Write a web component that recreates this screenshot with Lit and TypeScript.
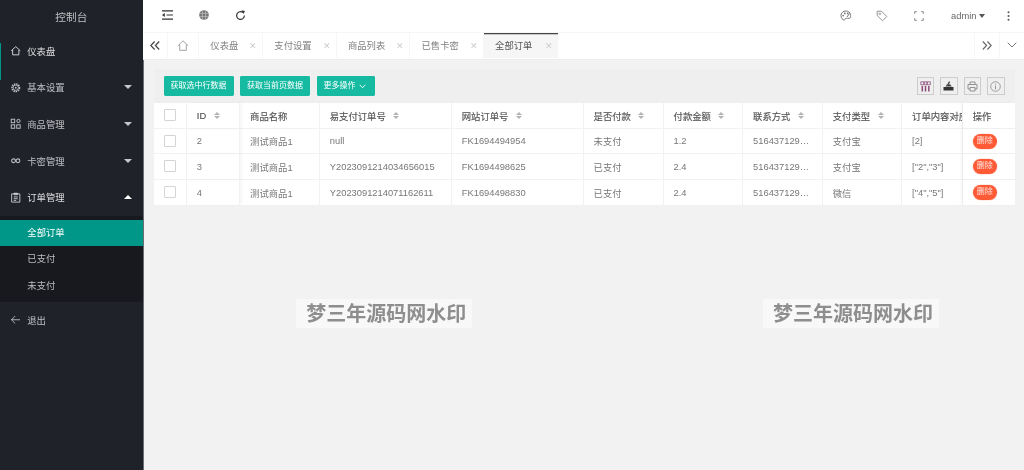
import { LitElement, html, css, svg } from "lit";
import { customElement } from "lit/decorators.js";

const I = {
  home: svg`<path d="M1.5 7 7 2l5.500 5M3.200 6v6h7.600V6" fill="none" stroke="currentColor" stroke-width="1.100"/>`,
  gear: svg`<circle cx="7" cy="7" r="4.600" fill="none" stroke="currentColor" stroke-width="1.800" stroke-dasharray="1.800 .9"/><circle cx="7" cy="7" r="3.200" fill="none" stroke="currentColor" stroke-width="1"/><circle cx="7" cy="7" r="1.100" fill="currentColor"/>`,
  app: svg`<g fill="none" stroke="currentColor" stroke-width="1.200"><rect x="1.500" y="1.500" width="4.200" height="4.200"/><circle cx="10.300" cy="3.600" r="2"/><rect x="1.500" y="8.300" width="4.200" height="4.200"/><rect x="8.200" y="8.300" width="4.200" height="4.200"/></g>`,
  link: svg`<g fill="none" stroke="currentColor" stroke-width="1.300"><circle cx="4.300" cy="7" r="2.300"/><circle cx="9.700" cy="7" r="2.300"/></g>`,
  order: svg`<path d="M2 2.300h10v10H2zM5 1.500h4v1.800H5zM4.500 6h5M4.500 8.200h5M4.500 10.200h3" fill="none" stroke="currentColor" stroke-width="1"/>`,
  back: svg`<path d="M6.300 2.500 1.800 7l4.500 4.500M1.800 7h10.400" fill="none" stroke="currentColor" stroke-width="1.100"/>`,
};

const menu = [
  { t: "基本设置", i: I.gear },
  { t: "商品管理", i: I.app },
  { t: "卡密管理", i: I.link },
];

const heads = ["易支付订单号", "网站订单号", "是否付款", "付款金额", "联系方式", "支付类型"];
const rows = [
  ["2", "测试商品1", "null", "FK1694494954", "未支付", "1.2", "516437129…", "支付宝", "[2]"],
  ["3", "测试商品1", "Y2023091214034656015", "FK1694498625", "已支付", "2.4", "516437129…", "支付宝", '["2","3"]'],
  ["4", "测试商品1", "Y2023091214071162611", "FK1694498830", "已支付", "2.4", "516437129…", "微信", '["4","5"]'],
];
const tabs = [
  { t: "仪表盘", cls: "w3" },
  { t: "支付设置", cls: "" },
  { t: "商品列表", cls: "" },
  { t: "已售卡密", cls: "" },
  { t: "全部订单", cls: "on" },
];

@customElement("app-root")
export class AppRoot extends LitElement {
  static styles = css`
    :host { display: flex; width: 100%; height: 100vh; overflow: hidden; font-family: "Liberation Sans", "Noto Sans CJK SC", sans-serif; font-size: 9.33px; color: #666; background: #f2f2f2; filter: blur(.3px); }
    svg { display: block; flex: none; }
    .side { width: 142.67px; flex: none; background: #20222a; color: rgba(255,255,255,.7); border-right: 1px solid #6b6d72; box-sizing: content-box; margin-right: -.67px; }
    .brand { height: 32.500px; display: flex; align-items: center; justify-content: center; font-size: 10.67px; color: rgba(255,255,255,.7); }
    .item { height: 36.67px; display: flex; align-items: center; padding-left: 9.900px; gap: 5.900px; position: relative; box-sizing: border-box; }
    .item.first { color: rgba(255,255,255,.85); }
    .item.first::before { content: ""; position: absolute; left: 0; top: 10.500px; width: 1.400px; background: #009688; height: 37px; }
    .item.bright { color: rgba(255,255,255,.85); }
    .item svg { width: 11.500px; height: 11.500px; }
    .caret { margin-left: auto; margin-right: 10.500px; width: 0; height: 0; border: 4px solid transparent; border-top: 4px solid rgba(255,255,255,.75); border-bottom-width: 0; }
    .caret.up { border-top-width: 0; border-bottom: 4px solid #fff; }
    .sub { background: #18191e; padding: 3.800px 0 2.300px; }
    .sub div { height: 26.67px; line-height: 26.67px; padding-left: 27.300px; }
    .sub .on { background: #009688; color: #fff; }
    .main { flex: 1; min-width: 0; display: flex; flex-direction: column; }
    .top { height: 32.500px; box-sizing: border-box; background: #fff; border-bottom: 1px solid #f6f6f6; display: flex; align-items: center; color: #555; flex: none; }
    .ti { width: 36.800px; display: flex; justify-content: center; }
    .top .left { display: flex; margin-left: 6px; }
    .top .right { margin-left: auto; margin-right: 5px; display: flex; align-items: center; }
    .admin { display: flex; align-items: center; gap: 3px; margin-left: 13.500px; width: 51px; color: #666; }
    .admin i { border: 3.700px solid transparent; border-top: 4px solid #555; border-bottom-width: 0; }
    .dots { width: 22px; display: flex; justify-content: center; margin-left: -5px; }
    .tabs { height: 27px; box-sizing: border-box; background: #fff; display: flex; flex: none; border-bottom: 1.500px solid #ececec; color: #808080; }
    .tb { display: flex; align-items: center; justify-content: center; border-right: 1px solid #f6f6f6; flex: none; box-sizing: border-box; height: 25.500px; }
    .t-l { width: 25.300px; }
    .t-h { width: 31px; color: #999; }
    .tab { width: 73.600px; display: flex; align-items: center; padding-left: 11px; border-right: 1px solid #f6f6f6; box-sizing: border-box; flex: none; height: 25.500px; }
    .tab.w3 { width: 64px; }
    .tab b { font-weight: 400; }
    .tab span { margin-left: auto; margin-right: 5px; padding-top: 1.500px; color: #ccc; font-size: 8.500px; line-height: 1; }
    .tab.on { background: #f6f6f6; box-shadow: inset 0 1.300px 0 #444; color: #555; border-right: 0; }
    .tabs .sp { flex: 1; }
    .t-r { width: 26px; border-left: 1px solid #f6f6f6; border-right: 1px solid #f6f6f6; color: #777; }
    .t-d { width: 24px; border-right: 0; color: #777; }
    .content { flex: 1; position: relative; padding: 9.500px 9px 0 10.500px; min-height: 0; }
    .card { background: #efefef; }
    .bar { height: 34px; display: flex; align-items: center; padding: 0 10.300px 0 10px; box-sizing: border-box; }
    .btn { height: 20px; line-height: 20px; background: #16baa1; color: #fff; font-size: 8px; padding: 0 7px; border-radius: 1.400px; margin-right: 6.500px; white-space: nowrap; display: flex; align-items: center; gap: 3.500px; }
    .btn.more { padding-right: 9px; }
    .tools { margin-left: auto; display: flex; gap: 6px; }
    .tool { width: 17.500px; height: 17.500px; border: 1px solid #ccc; box-sizing: border-box; display: flex; align-items: center; justify-content: center; color: #777; }
    .grid { display: grid; grid-template-columns: 33.300px 53.300px 79.700px 132px 131.800px 80px 79.500px 79.700px 79.300px 60.700px 52.300px; grid-auto-rows: 25.500px; background: #fff; }
    .c { display: flex; align-items: center; padding: 1px 0 0 10px; border-bottom: 1px solid #f2f2f2; border-right: 1px solid #f2f2f2; box-sizing: border-box; white-space: nowrap; overflow: hidden; color: #777; }
    .c.h { font-weight: 400; color: #555; -webkit-text-stroke: .15px #555; }
    .c.last { border-bottom: 0; }
    .c.ck { padding: 0 0 0 10.600px; }
    .box { width: 11.600px; height: 11.600px; border: 1px solid #d4d4d4; box-sizing: border-box; background: #fff; border-radius: 1px; }
    .c.fixl { box-shadow: 2px 0 3px rgba(0,0,0,.04); position: relative; z-index: 1; }
    .c.fixr { box-shadow: -2px 0 3px rgba(0,0,0,.04); position: relative; z-index: 1; background: #fff; border-right: 0; }
    .sort { display: flex; flex-direction: column; gap: 1.300px; margin-left: 7.500px; }
    .sort i { width: 0; height: 0; border: 3px solid transparent; }
    .sort i:first-child { border-top-width: 0; border-bottom: 3px solid #b4b4b4; }
    .sort i:last-child { border-bottom-width: 0; border-top: 3px solid #b4b4b4; }
    .del { height: 14.67px; line-height: 14.67px; background: #ff5a36; color: rgba(255,255,255,.85); font-size: 8px; padding: 0 4px; border-radius: 8px; box-shadow: 0 0 0 .6px #ffd9cf; }
    .wm { position: absolute; top: 239.500px; width: 176px; height: 29px; padding: 0 0 1.500px 4px; box-sizing: border-box; background: rgba(255,255,255,.45); display: flex; align-items: center; justify-content: center; color: #8e8e8e; font-size: 20px; font-weight: 700; white-space: nowrap; filter: blur(.4px); }
    .wm.a { left: 153.300px; }
    .wm.b { left: 620px; }
  `;

  sortIcon() {
    return html`<span class="sort"><i></i><i></i></span>`;
  }

  render() {
    return html`
      <aside class="side">
        <div class="brand">控制台</div>
        <div class="item first"><svg viewBox="0 0 14 14">${I.home}</svg>仪表盘</div>
        ${menu.map((m) => html`<div class="item"><svg viewBox="0 0 14 14">${m.i}</svg>${m.t}<span class="caret"></span></div>`)}
        <div class="item bright"><svg viewBox="0 0 14 14">${I.order}</svg>订单管理<span class="caret up"></span></div>
        <div class="sub"><div class="on">全部订单</div><div>已支付</div><div>未支付</div></div>
        <div class="item"><svg viewBox="0 0 14 14">${I.back}</svg>退出</div>
      </aside>
      <div class="main">
        <header class="top">
          <div class="left">
            <div class="ti"><svg width="11" height="10" viewBox="0 0 11 10"><path d="M0 .8h11M4.500 5H11M0 9.200h11" stroke="#333" stroke-width="1.200"/><path d="M2.800 3 0 5l2.800 2z" fill="#333"/></svg></div>
            <div class="ti"><svg width="10" height="10" viewBox="0 0 10 10"><circle cx="5" cy="5" r="4.800" fill="#777"/><path d="M.5 3.400h9M.5 6.600h9M3.400.5v9M6.600.5v9" stroke="#ccc" stroke-width=".6"/></svg></div>
            <div class="ti"><svg width="11" height="11" viewBox="0 0 11 11"><path d="M9.400 5.600A3.900 3.900 0 1 1 7.800 2.400" fill="none" stroke="#333" stroke-width="1.200"/><path d="M6.600 .2 10 .9 8.400 4z" fill="#333"/></svg></div>
          </div>
          <div class="right">
            <div class="ti"><svg width="12" height="11" viewBox="0 0 12 11"><path d="M6 1C3 1 1 3 1 5.600S2.800 10 4.200 10c.9 0 .7-1.400 1.600-1.600.8-.2 2.400.3 4.200-.4C11.400 7.300 11 1 6 1z" fill="none" stroke="#777" stroke-width="1"/><circle cx="3.200" cy="5.600" r=".9" fill="#777"/><circle cx="4.800" cy="3.400" r=".9" fill="#777"/><circle cx="7.600" cy="3.400" r=".9" fill="#777"/><path d="M7 7 9.500 3.500" stroke="#777" stroke-width="1"/></svg></div>
            <div class="ti"><svg width="12" height="12" viewBox="0 0 12 12"><path d="M1.200 1.200h4.300l5.300 5.300-4.300 4.300-5.300-5.300z" fill="none" stroke="#888" stroke-width=".9" stroke-linejoin="round"/><circle cx="3.800" cy="3.800" r=".9" fill="none" stroke="#888" stroke-width=".7"/></svg></div>
            <div class="ti"><svg width="10" height="10" viewBox="0 0 10 10"><path d="M.7 2.800V.7h2.100M7.200.7h2.100v2.100M.7 7.200v2.100h2.100M9.300 7.200v2.100H7.200" fill="none" stroke="#888" stroke-width="1"/></svg></div>
            <div class="admin">admin<i></i></div>
            <div class="dots"><svg width="3" height="10" viewBox="0 0 3 10"><circle cx="1.500" cy="1.300" r="1" fill="#555"/><circle cx="1.500" cy="5" r="1" fill="#555"/><circle cx="1.500" cy="8.700" r="1" fill="#555"/></svg></div>
          </div>
        </header>
        <nav class="tabs">
          <div class="tb t-l"><svg width="10" height="9" viewBox="0 0 10 9"><path d="M4.600.5.800 4.500l3.800 4M9.200.5 5.400 4.500l3.800 4" fill="none" stroke="#444" stroke-width="1.200"/></svg></div>
          <div class="tb t-h"><svg width="12" height="11" viewBox="0 0 12 11"><path d="M.8 5.800 6 .8l5.200 5M2.700 4.500v5.800h6.600V4.500" fill="none" stroke="#999" stroke-width=".9"/></svg></div>
          ${tabs.map((t) => html`<div class="tab ${t.cls}"><b>${t.t}</b><span>✕</span></div>`)}
          <div class="sp"></div>
          <div class="tb t-r"><svg width="10" height="9" viewBox="0 0 10 9"><path d="M.8.500l3.800 4-3.800 4M5.400.500l3.800 4-3.800 4" fill="none" stroke="#666" stroke-width="1.100"/></svg></div>
          <div class="tb t-d"><svg width="10" height="6" viewBox="0 0 10 6"><path d="M.7.700 5 5l4.300-4.300" fill="none" stroke="#777" stroke-width="1"/></svg></div>
        </nav>
        <main class="content">
          <section class="card">
            <div class="bar">
              <div class="btn">获取选中行数据</div>
              <div class="btn">获取当前页数据</div>
              <div class="btn more">更多操作<svg width="7" height="5" viewBox="0 0 7 5"><path d="M.7.800 3.500 3.800 6.300.800" fill="none" stroke="#fff" stroke-width=".9"/></svg></div>
              <div class="tools">
                <div class="tool"><svg width="11" height="11" viewBox="0 0 11 11"><path d="M.8.800h3v3h-3zM4.300.800h2.600v3H4.300zM7.300.800h3v3h-3z" fill="none" stroke="#8a4a7a" stroke-width=".8"/><path d="M2.300 5v5.500M5.500 5v5.500M8.800 5v5.500" stroke="#8a4a7a" stroke-width="1.500"/></svg></div>
                <div class="tool"><svg width="11" height="10" viewBox="0 0 11 10"><path d="M.5 6h10v3.500H.5z" fill="#333"/><path d="M2.500 5.500 4 3.200h3.200l1.500 2.300z" fill="#444"/><path d="M4.300 3.200 6 .3l1.200.8-1.400 2.100z" fill="#444"/></svg></div>
                <div class="tool"><svg width="11" height="11" viewBox="0 0 11 11"><path d="M3 3.500V1h5v2.500M3 8H1V3.500h9V8H8M3 6.500h5V10H3z" fill="none" stroke="#888" stroke-width=".9"/></svg></div>
                <div class="tool"><svg width="11" height="11" viewBox="0 0 11 11"><circle cx="5.500" cy="5.500" r="4.800" fill="none" stroke="#888" stroke-width=".8"/><path d="M5.500 4.600v3.700" stroke="#888" stroke-width=".9"/><circle cx="5.500" cy="3" r=".6" fill="#888"/></svg></div>
              </div>
            </div>
            <div class="grid">
              <div class="c h ck"><span class="box"></span></div>
              <div class="c h fixl">ID${this.sortIcon()}</div>
              <div class="c h">商品名称</div>
              ${heads.map((h) => html`<div class="c h">${h}${this.sortIcon()}</div>`)}
              <div class="c h">订单内容对应</div>
              <div class="c h fixr">操作</div>
              ${rows.map((r, i) => {
                const last = i === rows.length - 1 ? "last" : "";
                return html`
                  <div class="c ck ${last}"><span class="box"></span></div>
                  ${r.map((v, j) => html`<div class="c ${last} ${j === 0 ? "fixl" : ""}">${v}</div>`)}
                  <div class="c fixr ${last}"><span class="del">删除</span></div>`;
              })}
            </div>
          </section>
          <div class="wm a">梦三年源码网水印</div>
          <div class="wm b">梦三年源码网水印</div>
        </main>
      </div>
    `;
  }
}
